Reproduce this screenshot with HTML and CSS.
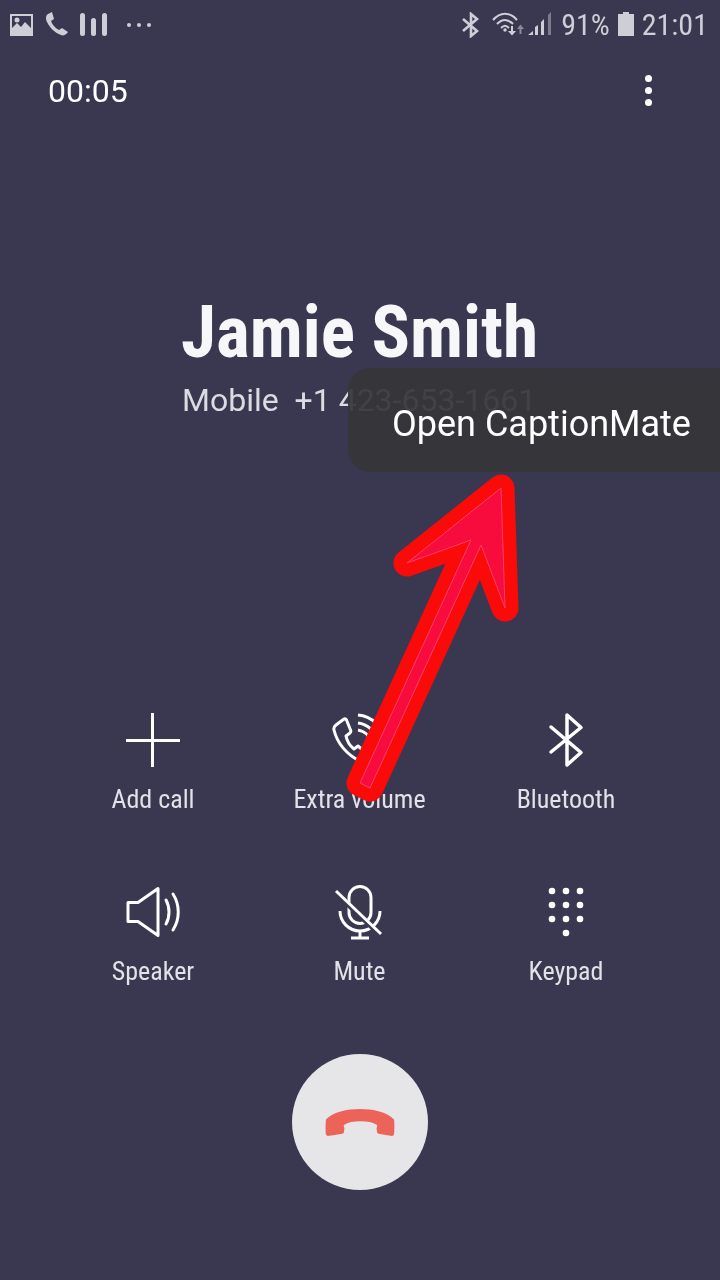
FILE: index.html
```html
<!DOCTYPE html>
<html lang="en">
<head>
  <meta charset="UTF-8" />
  <title>Call</title>
  <link rel="stylesheet" href="styles.css">
</head>
<body>
  <div class="screen">
    <div class="status">
      <div class="status-left">
        <svg class="ic" width="26" height="24" viewBox="0 0 26 24"><path fill="#cfced6" fill-rule="evenodd" d="M1 2h23v22H1zM3 4v12l5-5 4 4 4-5 6 6V4zM8 5.500a2.500 2.500 0 1 1 0 5 2.500 2.500 0 0 1 0-5z"/></svg>
        <svg class="ic call-ic" width="24" height="24" viewBox="0 0 24 24"><path fill="#cfced6" d="M7 0 3 2C0 4 1 8 2 10c3 6 8 11 14 13 2 1 5 0 7-3l-6-4-3 2c-4-2-7-6-8-9l3-2z"/></svg>
        <svg class="ic bars-ic" width="30" height="24" viewBox="0 0 30 24"><g fill="#cfced6"><rect x="1" y="1" width="5" height="23" rx="2.500"/><rect x="12" y="6" width="5" height="18" rx="2.500"/><rect x="23" y="1" width="5" height="23" rx="2.500"/></g></svg>
        <div class="more-dots"><i></i><i></i><i></i></div>
      </div>
      <div class="status-right">
        <svg width="20" height="26" viewBox="0 0 20 26"><path fill="none" stroke="#cfced6" stroke-width="2.600" d="M2 7l14 12-6 5V2l6 5L2 19"/></svg>
        <svg class="wifi" width="32" height="24" viewBox="0 0 32 24"><g fill="none" stroke="#cfced6" stroke-width="2"><path d="M1 8c7-8.500 17-8.500 24 0"/><path d="M5 12c5-5.500 11-5.500 16 0"/><path d="M9 16c3-3 5-3 8 0"/></g><circle cx="13" cy="18" r="1.700" fill="#cfced6"/><path fill="#cfced6" d="M16 19h3v-5h2v5h3l-4 4.500z"/><path fill="#8b8a98" d="M25 17l3.500-4.500L32 17h-2.500v5h-2v-5z"/></svg>
        <svg class="signal" width="24" height="24" viewBox="0 0 24 24"><path fill="#cfced6" d="M0 23l5-4v4zM7 23v-8l3-2v10zM13 23V10l3-3v16z"/><path fill="#7e7c8c" d="M20 23V3l3-3v23z"/></svg>
        <span class="status-text pct">91%</span>
        <svg class="batt" width="16" height="24" viewBox="0 0 16 24"><path fill="#cfced6" d="M5 0h6v2h5v22H0V2h5z"/></svg>
        <span class="status-text clock">21:01</span>
      </div>
    </div>

    <div class="topbar">
      <span class="timer">00:05</span>
      <div class="kebab"><i></i><i></i><i></i></div>
    </div>

    <div class="caller">
      <div class="name">Jamie Smith</div>
      <div class="number">Mobile&nbsp; +1 423-653-1661</div>
    </div>

    <div class="actions">
      <div class="action">
        <svg width="56" height="56" viewBox="0 0 56 56"><path stroke="#fff" stroke-width="3" d="M1 27.500h54M27.500 0v54"/></svg>
        <span class="label">Add call</span>
      </div>
      <div class="action">
        <svg width="56" height="56" viewBox="0 0 56 56"><g fill="none" stroke="#fff" stroke-width="3" stroke-linejoin="round"><path d="M12 6 4 12c-2 1.500-2.500 3-2 5 3 13 13 25 26 31l6-8-8-7-4 3c-4-3-7-8-8-13l4-3c1-1 1-2 .500-3l-4-10c-.500-1-1.500-1.500-2.500-1z"/><path d="M26 17c6 1 11 5 12 11"/><path d="M26 10c9 1 18 8 19 18"/><path d="M26 2c13 1 26 12 27 26"/></g></svg>
        <span class="label">Extra volume</span>
      </div>
      <div class="action">
        <svg width="56" height="56" viewBox="0 0 56 56"><path fill="none" stroke="#fff" stroke-width="3.500" stroke-linejoin="round" stroke-linecap="round" d="M13 14l30 25.500L29 52V2l14 12.500L13 39"/></svg>
        <span class="label">Bluetooth</span>
      </div>
      <div class="action">
        <svg width="56" height="56" viewBox="0 0 56 56"><g fill="none" stroke="#fff" stroke-width="3" stroke-linejoin="round" stroke-linecap="round"><path d="M3 17.500h10L33 3.500v47L13 36.500H3z"/><path d="M41 15c4 7 4 17 0 24"/><path d="M48 9c7 11 7 25 0 36"/></g></svg>
        <span class="label">Speaker</span>
      </div>
      <div class="action">
        <svg width="56" height="56" viewBox="0 0 56 56"><g fill="none" stroke="#fff" stroke-width="3"><rect x="17" y="1.500" width="22" height="37" rx="11"/><path d="M8 26c0 11 9 20 20 20s20-9 20-20M28 46v6M19 53h18"/></g><path stroke="#3a3850" stroke-width="5" d="M8 12l38 36"/><path stroke="#fff" stroke-width="3" d="M4 6l45 43"/></svg>
        <span class="label">Mute</span>
      </div>
      <div class="action">
        <svg width="56" height="56" viewBox="0 0 56 56"><g fill="#fff"><circle cx="14" cy="6" r="3.300"/><circle cx="28" cy="6" r="3.300"/><circle cx="42" cy="6" r="3.300"/><circle cx="14" cy="20" r="3.300"/><circle cx="28" cy="20" r="3.300"/><circle cx="42" cy="20" r="3.300"/><circle cx="14" cy="34" r="3.300"/><circle cx="28" cy="34" r="3.300"/><circle cx="42" cy="34" r="3.300"/><circle cx="28" cy="48" r="3.300"/></g></svg>
        <span class="label">Keypad</span>
      </div>
    </div>

    <div class="end-wrap">
      <div class="end-btn">
        <svg width="70" height="29" viewBox="0 0 72 30.500" preserveAspectRatio="none"><path fill="#ec6459" d="M1 12C9 4 22 1 36 1s27 3 35 11c.500 3 .500 13 0 16-.500 1-1 1.500-2 1.500l-14-2.500c-1-.500-1.500-1-1.500-2l-.500-4c.500-1 1-2 .500-3-4-3-10-4-17-4s-13 1-17 4c-.500 1 0 2 .500 3l-.500 4c0 1-.500 1.500-1.500 2L3 29.500c-1 0-1.500-.500-2-1.500-.500-3-.500-13 0-16z"/></svg>
      </div>
    </div>

    <div class="tooltip">Open CaptionMate</div>

    <svg class="arrow" width="720" height="1280" viewBox="0 0 720 1280">
      <polygon points="501,488 505,608 481,545 370,788 360,783 471,540 407,563" fill="#f80c3e" stroke="#fb0a0a" stroke-width="27" stroke-linejoin="round"/>
      <polygon points="501,488 505,608 481,545 370,788 360,783 471,540 407,563" fill="#f80c3e" stroke="#f5416a" stroke-width="1"/>
    </svg>
  </div>
</body>
</html>
```

FILE: styles.css
```css
* {
  box-sizing: border-box;
}
body {
  margin: 0;
  font-family: Roboto, "Liberation Sans", sans-serif;
  color: #fff;
}
.screen {
  position: relative;
  width: 720px;
  height: 1280px;
  overflow: hidden;
  background: #3a3850;
}
.screen > div {
  will-change: transform;
}
svg {
  display: block;
}

.status {
  height: 48px;
  padding: 12px 12px 0 9px;
  display: flex;
  justify-content: space-between;
}
.status-left {
  display: flex;
  align-items: flex-start;
  gap: 10px;
}
.more-dots {
  display: flex;
  gap: 6px;
  margin: 11px 0 0 8px;
}
.more-dots i {
  width: 4px;
  height: 4px;
  border-radius: 50%;
  background: #cfced6;
}
.status-right {
  display: flex;
  align-items: flex-start;
  color: #cfced6;
}
.wifi {
  margin-left: 11px;
}
.signal {
  margin-left: 4px;
}
.status-text {
  font-size: 30px;
  line-height: 26px;
  font-stretch: 80%;
}
.pct {
  margin-left: 9px;
}
.batt {
  margin-left: 8px;
}
.clock {
  margin-left: 8px;
}

.topbar {
  height: 80px;
  padding: 26px 68px 0 48px;
  display: flex;
  justify-content: space-between;
}
.timer {
  font-size: 32px;
  line-height: 34px;
}
.kebab {
  display: flex;
  flex-direction: column;
  gap: 5px;
  margin-top: 1px;
}
.kebab i {
  width: 7px;
  height: 7px;
  border-radius: 50%;
  background: #fff;
}

.caller {
  padding: 164px 0 0 182px;
  height: 585px;
}
.name {
  margin-left: -1px;
  font-size: 71.5px;
  line-height: 82px;
  font-weight: 700;
  font-stretch: 75%;
  color: #f7f7fa;
}
.number {
  font-size: 32px;
  line-height: 38px;
  margin-top: 7px;
  color: #dcdbe2;
}

.actions {
  display: grid;
  grid-template-columns: repeat(3, 206.5px);
  grid-template-rows: 172px 169px;
  justify-content: center;
  margin-left: -1px;
}
.action {
  display: flex;
  flex-direction: column;
  align-items: center;
}
.label {
  margin-top: 14px;
  font-size: 26px;
  line-height: 32px;
  font-stretch: 80%;
  color: #e3e2e8;
}

.end-wrap {
  display: flex;
  justify-content: center;
}
.end-btn {
  width: 136px;
  height: 136px;
  border-radius: 50%;
  background: #e6e6e9;
  display: flex;
  align-items: center;
  justify-content: center;
}

.tooltip {
  position: absolute;
  left: 348px;
  top: 368px;
  width: 372px;
  height: 104px;
  padding: 36px 0 0 44px;
  border-radius: 22px 0 0 22px;
  background: rgba(54, 53, 57, 0.93);
  font-size: 36px;
  line-height: 40px;
  color: #fff;
}
.arrow {
  position: absolute;
  left: 0;
  top: 0;
}
```
